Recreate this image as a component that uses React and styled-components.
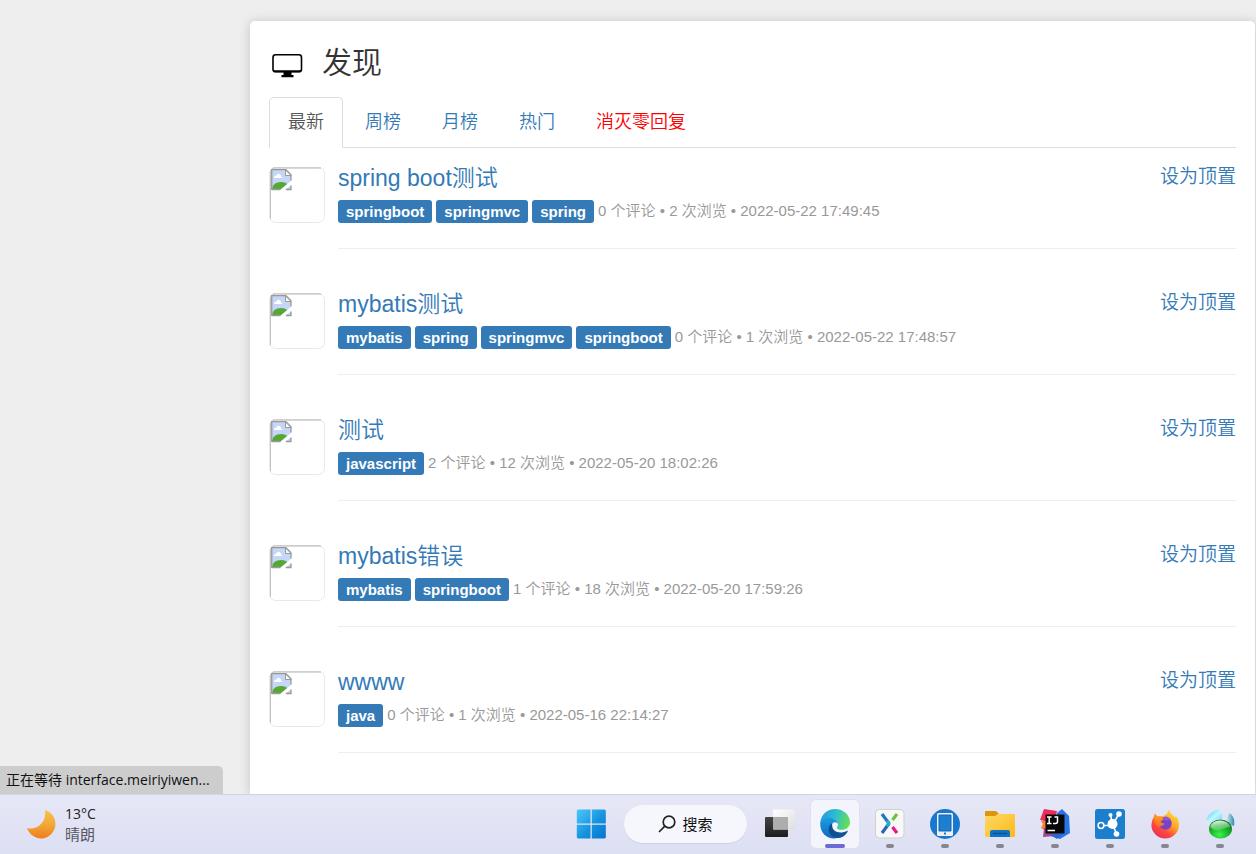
import React from "react";
import styled, { createGlobalStyle, css } from "styled-components";

const pageFont = '"Liberation Sans", "Noto Sans CJK SC", sans-serif';
const systemFont = '"Open Sans", "Noto Sans CJK SC", sans-serif';
const blue = "#337ab7";

const GlobalStyle = createGlobalStyle`
  *, *::before, *::after { box-sizing: border-box; }
  body { margin: 0; background: #eee; color: #333; font-family: ${pageFont}; }
  h1, h2, ul, p { margin: 0; padding: 0; font-weight: 350; }
  a { color: ${blue}; text-decoration: none; }
  button { font: inherit; border: 0; padding: 0; background: none; color: inherit; }
  svg { display: block; flex: none; }
`;

const Screen = styled.div`
  display: flex;
  flex-direction: column;
  height: 100vh;
`;

const Viewport = styled.div`
  position: relative;
  flex: 1;
  min-height: 0;
  overflow: hidden;
  display: flex;
  padding: 21px 1px 0 250px;
`;

const Card = styled.main`
  flex: 1;
  min-width: 0;
  padding: 20px 19px;
  background: #fff;
  border-radius: 5px 5px 0 0;
  box-shadow: 0 1px 12px rgba(0, 0, 0, 0.18);
`;

const Heading = styled.header`
  display: flex;
  align-items: center;
  gap: 19px;
  height: 44px;
  padding-left: 3px;
  margin-bottom: 12px;

  svg { margin-top: 4px; }
`;

const Title = styled.h1`
  font-size: 30px;
  line-height: 40px;
`;

const Tabs = styled.nav`
  display: flex;
  gap: 3px;
  height: 51px;
  margin-bottom: 19px;
  border-bottom: 1px solid #ddd;
`;

const Tab = styled.a`
  height: 51px;
  padding: 12px 18px;
  border: 1px solid transparent;
  border-radius: 5px 5px 0 0;
  font-size: 18px;
  line-height: 24px;
  font-weight: 350;
  ${(p) => p.$alert && css`color: #f00;`}
  ${(p) =>
    p.$active &&
    css`
      color: #555;
      background: #fff;
      border-color: #ddd #ddd #fff;
    `}
`;

const Row = styled.article`
  display: flex;
  align-items: flex-start;
  gap: 13px;
  height: 126px;
`;

const RowBody = styled.div`
  flex: 1;
  min-width: 0;
  padding-bottom: 25px;
  border-bottom: 1px solid #eee;
`;

const RowTop = styled.div`
  display: flex;
  justify-content: space-between;
  height: 33px;
`;

const RowTitle = styled.h2`
  font-size: 23px;
  line-height: 22px;
`;

const PinLink = styled.a`
  font-size: 19px;
  line-height: 20px;
  font-weight: 350;
`;

const RowMeta = styled.div`
  display: flex;
  align-items: flex-start;
  gap: 4px;
  height: 23px;
`;

const Tag = styled.a`
  padding: 0 8px;
  border-radius: 3px;
  background: ${blue};
  color: #fff;
  font-size: 15px;
  line-height: 23px;
  font-weight: 700;
`;

const Stats = styled.span`
  color: #999;
  font-size: 15px;
  line-height: 21px;
  font-weight: 350;
`;

const StatusBubble = styled.div`
  position: absolute;
  left: 0;
  bottom: 0;
  width: 223px;
  height: 28px;
  padding: 0 6px;
  border-radius: 0 5px 0 0;
  background: #cdcdcd;
  color: #111;
  font: 14px/28px ${systemFont};
  white-space: nowrap;
`;

const Taskbar = styled.footer`
  display: flex;
  align-items: center;
  justify-content: space-between;
  flex: none;
  height: 60px;
  padding: 0 12px 2px 26px;
  border-top: 1px solid #d2d3e6;
  background: linear-gradient(#e6e7f6, #dddff3);
  font-family: ${systemFont};
`;

const Weather = styled.button`
  display: flex;
  align-items: center;
  gap: 9px;
  text-align: left;
`;

const WeatherText = styled.span`
  display: flex;
  flex-direction: column;
  font-size: 14px;
  line-height: 20px;
  color: #222;

  small { font-size: 15px; color: #55565f; }
`;

const Apps = styled.nav`
  display: flex;
  align-items: center;
  gap: 7px;
`;

const AppButton = styled.button`
  position: relative;
  display: grid;
  place-items: center;
  width: 48px;
  height: 48px;
  border-radius: 5px;
  ${(p) =>
    p.$active &&
    css`
      background: #f3f4fc;
      box-shadow: 0 0 0 1px #dfe0f0;
    `}
`;

const Running = styled.span`
  position: absolute;
  bottom: 0;
  left: 50%;
  transform: translateX(-50%);
  width: ${(p) => (p.$active ? 20 : 8)}px;
  height: 4px;
  border-radius: 2px;
  background: ${(p) => (p.$active ? "#6b69d6" : "#85868f")};
`;

const Search = styled.button`
  display: flex;
  align-items: center;
  justify-content: center;
  gap: 6px;
  width: 123px;
  height: 38px;
  margin: 0 2px;
  border-radius: 19px;
  background: #f6f7fd;
  box-shadow: 0 1px 1px #cfd1e4;
  font-size: 15px;
  color: #111;
`;

const MonitorIcon = () => (
  <svg width="31" height="25" viewBox="0 0 31 25" aria-hidden="true">
    <rect x="1" y="1.8" width="28.5" height="17" rx="2.6" fill="none" stroke="#000" strokeWidth="1.6" />
    <path d="M1.5 17.2h27.5c0 1.2-.8 2-2 2h-23.500c-1.200 0-2-.8-2-2z" fill="#000" />
    <path d="M11.500 19h8v3h2v2.300h-12v-2.300h2z" fill="#000" />
  </svg>
);

const Avatar = () => (
  <svg width="56" height="56" viewBox="0 0 56 56" role="img" aria-label="avatar">
    <rect x=".5" y=".5" width="55" height="55" rx="6" fill="#fff" stroke="#e8e8e8" />
    <path d="M1.500 52V5q0-3.500 3.500-3.500" fill="none" stroke="#c4c4c4" />
    <path d="M4 1h48" stroke="#b4b4b4" />
    <path d="M3 3h14l5 5v15h-19z" fill="#c5d6f7" />
    <path d="M5 11q0-2.500 2.500-2.500q1-2.500 3-1.500q2 1 1.500 3q1.500 0 1.500 1z" fill="#fff" />
    <path d="M3 22q1-7 9-7q5 0 7 3l-5 4.500z" fill="#56a835" />
    <path d="M23 13L11 23H16L23 17.500z" fill="#fff" />
    <path d="M2.700 23V2.700H17l5 5V13.500M3 22.500h8.500M17 22.500h5v-4" fill="none" stroke="#999" strokeWidth="1.300" />
    <path d="M16.500 3V8.500H22z" fill="#fff" stroke="#999" />
  </svg>
);

const MoonIcon = () => (
  <svg width="30" height="30" viewBox="0 0 30 30" aria-hidden="true">
    <defs>
      <linearGradient id="moon" x2="0" y2="1">
        <stop stopColor="#f6c344" />
        <stop offset=".5" stopColor="#f2a93b" />
        <stop offset="1" stopColor="#ef7d1a" />
      </linearGradient>
    </defs>
    <path d="M19 1A14.500 14.500 0 1 1 1 19C11 22 21 13 19 1z" fill="url(#moon)" />
  </svg>
);

const StartIcon = () => (
  <svg width="30" height="30" viewBox="0 0 30 30" aria-hidden="true">
    <defs>
      <linearGradient id="start" gradientUnits="userSpaceOnUse" x1="0" y1="0" x2="30" y2="30">
        <stop stopColor="#4fcbfb" />
        <stop offset=".55" stopColor="#1593df" />
        <stop offset="1" stopColor="#0672cf" />
      </linearGradient>
    </defs>
    <path d="M2.300 .500H14.500v14H.800V2Q.800 .500 2.300 .500zM15.800 .500h12.500q1.500 0 1.500 1.500v12.500H15.800zM.800 15.700h13.700V29.500H2.300Q.800 29.500 .800 28zM15.800 15.700h14V28q0 1.500-1.500 1.500H15.800z" fill="url(#start)" />
  </svg>
);

const SearchIcon = () => (
  <svg width="18" height="18" viewBox="0 0 18 18" fill="none" stroke="#222" strokeWidth="1.700" strokeLinecap="round" aria-hidden="true">
    <circle cx="11" cy="7" r="5.800" />
    <path d="M6.800 11.200L1.500 16.500" />
  </svg>
);

const TaskViewIcon = () => (
  <svg width="32" height="30" viewBox="0 0 32 30" aria-hidden="true">
    <defs>
      <linearGradient id="tvDark" x2="0" y2="1"><stop stopColor="#444" /><stop offset="1" stopColor="#1d1d1d" /></linearGradient>
      <linearGradient id="tvLight" x2="1" y2="1"><stop stopColor="#fff" /><stop offset="1" stopColor="#dedede" /></linearGradient>
    </defs>
    <rect x="1" y="8" width="23" height="20" rx="1" fill="url(#tvDark)" />
    <rect x="9" y=".5" width="22" height="20" rx="1" fill="url(#tvLight)" />
    <path d="M9 8h15v12.500H9z" fill="#adadad" />
  </svg>
);

const EdgeIcon = () => (
  <svg width="30" height="30" viewBox="0 0 256 256" aria-hidden="true">
    <defs>
      <linearGradient id="edgeTop" x1="0" y1=".3" x2="1" y2=".5"><stop stopColor="#2597df" /><stop offset=".5" stopColor="#2cbfcf" /><stop offset="1" stopColor="#68df50" /></linearGradient>
      <linearGradient id="edgeLeft" x2="0" y2="1"><stop stopColor="#1b9de2" /><stop offset="1" stopColor="#1268bd" /></linearGradient>
      <linearGradient id="edgeLow" x2="1"><stop stopColor="#114a8b" /><stop offset="1" stopColor="#0c59a4" /></linearGradient>
    </defs>
    <path d="M2 115C10 48 61 0 128 0c75 0 128 55 128 111 0 39-30 67-69 67-26 0-43-8-43-18 0-6 10-10 10-29 0-28-27-53-67-53-42 0-72 18-85 37z" fill="url(#edgeTop)" />
    <path d="M2 115C15 88 48 72 82 74c42 1 69 25 72 55-5-11-14-17-25-17-25 0-43 27-37 60 8 44 51 65 93 57-71 55-191 8-183-114z" fill="url(#edgeLeft)" />
    <path d="M105 119c-34 18-45 70-9 107 35 34 102 27 136-26 9-14 4-18-5-13-46 26-137 17-122-68z" fill="url(#edgeLow)" />
  </svg>
);

const XIcon = () => (
  <svg width="30" height="30" viewBox="0 0 30 30" aria-hidden="true">
    <rect x=".5" y=".5" width="28.500" height="28.500" rx="4" fill="#f8f8f7" stroke="#d0d0d0" />
    <g fill="none" strokeWidth="3.200" strokeLinejoin="round">
      <path d="M7 5L14 14.500" stroke="#2378bd" />
      <path d="M7 24L14 14.500" stroke="#2e63b0" />
      <path d="M12 11.800L14 14.500L12 17.200" stroke="#21afcc" />
      <path d="M22 5l-4.500 6" stroke="#76bd43" />
      <path d="M17.500 18l4.500 6" stroke="#e51a8b" />
    </g>
  </svg>
);

const PhoneIcon = () => (
  <svg width="30" height="30" viewBox="0 0 30 30" aria-hidden="true">
    <circle cx="15" cy="15" r="15" fill="#1877ce" />
    <rect x="7" y="4" width="16" height="23" rx="1.500" fill="#eee" />
    <path d="M9 6h12v16H9z" fill="#1c80d2" stroke="#1267b0" />
    <rect x="14" y="23.500" width="2" height="2" fill="#1877ce" />
  </svg>
);

const FolderIcon = () => (
  <svg width="32" height="28" viewBox="0 0 32 28" aria-hidden="true">
    <defs>
      <linearGradient id="folder" x2="1" y2="1"><stop stopColor="#ffd968" /><stop offset="1" stopColor="#fbb917" /></linearGradient>
    </defs>
    <path d="M1 2q0-1 1-1h10l3 3-3 4H1z" fill="#dc9609" />
    <path d="M1 6h10l3-2h16q1 0 1 1v21q0 1-1 1H2q-1 0-1-1z" fill="url(#folder)" />
    <path d="M6 27v-5q0-2 2-2h16q2 0 2 2v5z" fill="#1273c4" />
    <path d="M9 23.500h14" stroke="#0a4d91" strokeWidth="1.200" />
  </svg>
);

const IdeaIcon = () => (
  <svg width="30" height="30" viewBox="0 0 30 30" aria-hidden="true">
    <path d="M4 0l13 2-3 12-14-3z" fill="#ef2b59" />
    <path d="M1 12h8v12l-8-5 2-4z" fill="#f5832e" />
    <path d="M17 4l5-4 7 7 1 17-10 6-9-3z" fill="#2776e8" />
    <path d="M4 19l-1 9 12-1 7-8z" fill="#9c4b98" />
    <path d="M9 25l8 5 5-5z" fill="#3263c6" />
    <path d="M5.500 5.500h19v19h-19z" fill="#080808" />
    <path d="M7 8h4.500M9.200 8v6.500M7 14.500h4.500M14.500 8h3v4.500q0 2-2 2H13M7.500 21.500h7.500" fill="none" stroke="#fff" strokeWidth="1.500" />
  </svg>
);

const NodesIcon = () => (
  <svg width="30" height="30" viewBox="0 0 30 30" aria-hidden="true">
    <rect width="30" height="30" rx="2.500" fill="#1b7fcd" />
    <path d="M6 16.500h12L15.500 6M18 15l6-10M18 16l3.500 9" fill="none" stroke="#fff" strokeWidth="1.600" />
    <circle cx="17.500" cy="15" r="5" fill="#fff" />
    <circle cx="15.500" cy="6" r="2" fill="#fff" />
    <circle cx="24" cy="5" r="2.800" fill="#fff" />
    <circle cx="21.500" cy="25" r="2.800" fill="#fff" />
    <circle cx="6" cy="16.500" r="2.900" fill="#1b7fcd" stroke="#fff" strokeWidth="1.500" />
  </svg>
);

const FirefoxIcon = () => (
  <svg width="30" height="30" viewBox="0 0 30 30" aria-hidden="true">
    <defs>
      <linearGradient id="fox" x1=".85" y1="0" x2=".2" y2="1"><stop stopColor="#ffe144" /><stop offset=".4" stopColor="#ffac26" /><stop offset=".7" stopColor="#ff483c" /><stop offset="1" stopColor="#e82967" /></linearGradient>
      <linearGradient id="foxHead" x2="0" y2="1"><stop stopColor="#ff9a1f" /><stop offset="1" stopColor="#ff6a2a" /></linearGradient>
    </defs>
    <path d="M19 .500q1 4 4.500 6.500 1 .500 1.500 2 .800-1 .600-2.500 3.400 4 3.400 9.500a13.800 13.500 0 0 1-27.600 0q0-5 2.600-8.500l.500-3q2 1 3 3l6-.500q4-1.500 5.500-6.500z" fill="url(#fox)" />
    <circle cx="15.500" cy="14.500" r="6.200" fill="#7542c8" />
    <path d="M4.500 8q5-2 9.500 1.500-.500 2-3.500 2.500.500 2 4 2.500-.500 2-3.500 2.500-2 1-4 0-3-4-2.500-9z" fill="url(#foxHead)" />
    <path d="M12 9q5-4 9 2l-5 1z" fill="#9055d6" />
  </svg>
);

const BallIcon = () => (
  <svg width="30" height="30" viewBox="0 0 30 30" aria-hidden="true">
    <defs>
      <radialGradient id="ball" cx=".45" cy=".8" r=".7"><stop stopColor="#46f04f" /><stop offset=".5" stopColor="#1bbd2e" /><stop offset="1" stopColor="#0f7a2a" /></radialGradient>
      <linearGradient id="gloss" x1=".2" y1="0" x2=".5" y2="1"><stop stopColor="#fff" stopOpacity=".95" /><stop offset="1" stopColor="#d8ffd0" stopOpacity=".15" /></linearGradient>
      <linearGradient id="wing" x2="1" y2="1"><stop stopColor="#35c8ee" /><stop offset=".5" stopColor="#c4f7ff" /><stop offset="1" stopColor="#5ccbe4" /></linearGradient>
      <linearGradient id="wingRight" x2="1"><stop stopColor="#e2f7fb" /><stop offset="1" stopColor="#2f8dab" /></linearGradient>
    </defs>
    <path d="M1 10.500Q5 1 15 1q3 2 2 9-5 0-9 5-4-1-7-4.500z" fill="url(#wing)" />
    <path d="M20.500 11l4-7q6 4 4.500 13l-3-1q-2-3-5.500-5z" fill="url(#wingRight)" />
    <ellipse cx="15.500" cy="20" rx="11.500" ry="9.500" fill="url(#ball)" />
    <path d="M5 18q2-6.500 10-6.500 8 0 10.500 6.500-4 0-9 2.500-6 3-11.500-2.500z" fill="url(#gloss)" />
  </svg>
);

const tabs = [
  { label: "最新", active: true },
  { label: "周榜" },
  { label: "月榜" },
  { label: "热门" },
  { label: "消灭零回复", alert: true },
];

const posts = [
  { title: "spring boot测试", tags: ["springboot", "springmvc", "spring"], comments: 0, views: 2, date: "2022-05-22 17:49:45" },
  { title: "mybatis测试", tags: ["mybatis", "spring", "springmvc", "springboot"], comments: 0, views: 1, date: "2022-05-22 17:48:57" },
  { title: "测试", tags: ["javascript"], comments: 2, views: 12, date: "2022-05-20 18:02:26" },
  { title: "mybatis错误", tags: ["mybatis", "springboot"], comments: 1, views: 18, date: "2022-05-20 17:59:26" },
  { title: "wwww", tags: ["java"], comments: 0, views: 1, date: "2022-05-16 22:14:27" },
];

const apps = [
  { name: "Edge", Icon: EdgeIcon, active: true },
  { name: "Xftp", Icon: XIcon },
  { name: "Phone", Icon: PhoneIcon },
  { name: "Explorer", Icon: FolderIcon },
  { name: "IntelliJ IDEA", Icon: IdeaIcon },
  { name: "Nodes", Icon: NodesIcon },
  { name: "Firefox", Icon: FirefoxIcon },
  { name: "Navigator", Icon: BallIcon },
];

function Post({ title, tags, comments, views, date }) {
  return (
    <Row>
      <Avatar />
      <RowBody>
        <RowTop>
          <RowTitle><a href="#post">{title}</a></RowTitle>
          <PinLink href="#pin">设为顶置</PinLink>
        </RowTop>
        <RowMeta>
          {tags.map((t) => <Tag key={t} href="#tag">{t}</Tag>)}
          <Stats>{`${comments} 个评论 • ${views} 次浏览 • ${date}`}</Stats>
        </RowMeta>
      </RowBody>
    </Row>
  );
}

export default function App() {
  return (
    <Screen>
      <GlobalStyle />
      <Viewport>
        <Card>
          <Heading>
            <MonitorIcon />
            <Title>发现</Title>
          </Heading>
          <Tabs>
            {tabs.map((t) => (
              <Tab key={t.label} href="#tab" $active={t.active} $alert={t.alert}>{t.label}</Tab>
            ))}
          </Tabs>
          {posts.map((p) => <Post key={p.title} {...p} />)}
        </Card>
        <StatusBubble>正在等待 interface.meiriyiwen...</StatusBubble>
      </Viewport>
      <Taskbar>
        <Weather>
          <MoonIcon />
          <WeatherText>13°C<small>晴朗</small></WeatherText>
        </Weather>
        <Apps>
          <AppButton aria-label="Start"><StartIcon /></AppButton>
          <Search><SearchIcon />搜索</Search>
          <AppButton aria-label="Task view"><TaskViewIcon /></AppButton>
          {apps.map(({ name, Icon, active }) => (
            <AppButton key={name} aria-label={name} $active={active}>
              <Icon />
              <Running $active={active} />
            </AppButton>
          ))}
        </Apps>
      </Taskbar>
    </Screen>
  );
}
